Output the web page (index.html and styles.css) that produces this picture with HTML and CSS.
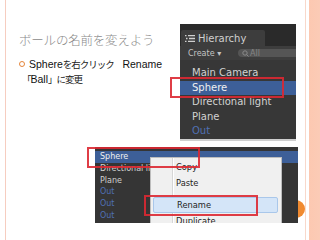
FILE: index.html
```html
<!DOCTYPE html>
<html lang="ja">
<head>
<meta charset="utf-8">
<link rel="stylesheet" href="styles.css">
</head>
<body>
<div class="slide">
  <h1 class="title">ボールの名前を変えよう</h1>
  <div class="point">
    <div class="line1"><span class="bullet"></span><span class="en">Sphere</span><span class="ja">を右クリック　</span><span class="en">Rename</span></div>
    <div class="line2"><span class="ja">「</span><span class="en">Ball</span><span class="ja">」に変更</span></div>
  </div>

  <div class="dot"></div>

  <div class="shot shot1">
    <div class="tabbar">
      <div class="tab">
        <svg class="tabicon" width="10" height="7" viewBox="0 0 10 7"><path d="M0 0.7h1.5M3 0.7h7M1 3.5h1.5M4 3.5h6M0 6.3h1.5M3 6.3h7" stroke="#cfcfcf" stroke-width="1.3" fill="none"/></svg>
        <span>Hierarchy</span>
      </div>
    </div>
    <div class="toolbar">
      <span class="create">Create ▾</span>
      <span class="search"><svg width="7" height="7" viewBox="0 0 7 7"><circle cx="3" cy="3" r="2.2" stroke="#8a8a8a" fill="none"/><path d="M4.6 4.6L6.5 6.5" stroke="#8a8a8a"/></svg>All</span>
    </div>
    <ul class="rows">
      <li>Main Camera</li>
      <li class="sel">Sphere</li>
      <li>Directional light</li>
      <li>Plane</li>
      <li class="prefab">Out</li>
    </ul>
  </div>

  <div class="shot shot2">
    <ul class="rows2">
      <li class="sel">Sphere</li>
      <li>Directional light</li>
      <li>Plane</li>
      <li class="prefab">Out</li>
      <li class="prefab">Out</li>
      <li class="prefab">Out</li>
    </ul>
    <div class="menu">
      <div class="item">Copy</div>
      <div class="item">Paste</div>
      <div class="sep"></div>
      <div class="item hl">Rename</div>
      <div class="item">Duplicate</div>
    </div>
  </div>

  <div class="mark mark1"></div>
  <div class="mark mark2"></div>
  <div class="mark mark3"></div>
</div>
</body>
</html>
```

FILE: styles.css
```css
html, body {
  margin: 0;
  padding: 0;
}
body {
  width: 320px;
  height: 240px;
  overflow: hidden;
  background: #fff;
}
.slide {
  position: relative;
  width: 320px;
  height: 240px;
  box-sizing: border-box;
  padding: 32px 0 0 19px;
  background: linear-gradient(to right,
    #fff 0, #fff 5px, #f6cdc0 5px, #f6cdc0 6px, #fff 6px,
    #fff 305px, #f8d8cb 305px, #f8d8cb 306px, #fff 306px,
    #fff 309px, #fcc8b1 309px, #fbcbb6 320px);
  font-family: "Liberation Sans", "Noto Sans CJK JP", sans-serif;
}
.title {
  margin: 0;
  font-family: "Noto Sans CJK JP", sans-serif;
  font-weight: 300;
  font-size: 12.5px;
  line-height: 15px;
  color: #8a8a8a;
  letter-spacing: -0.2px;
}
.point {
  margin-top: 10px;
  font-size: 10.5px;
  line-height: 15px;
  color: #111;
}
.line1 {
  display: flex;
  align-items: center;
}
.bullet {
  width: 4px;
  height: 4px;
  border: 1px solid #e5853a;
  border-radius: 50%;
  margin-right: 4px;
  margin-top: -1px;
}
.ja {
  font-family: "Noto Sans CJK JP", sans-serif;
  font-size: 9.5px;
  letter-spacing: -1px;
  color: #222;
}
.line2 {
  padding-left: 3px;
}
.dot {
  position: absolute;
  left: 287px;
  top: 200px;
  width: 18px;
  height: 18px;
  border-radius: 50%;
  background: #f08a30;
}
.shot {
  position: absolute;
  font-family: "DejaVu Sans", sans-serif;
  overflow: hidden;
}
.shot1 {
  left: 180px;
  top: 24px;
  width: 116px;
  height: 115px;
  background: #373737;
  border-bottom: 2px solid #cfcfcf;
}
.tabbar {
  height: 22px;
  background: #2a2a2a;
  display: flex;
  align-items: flex-end;
  padding-left: 1px;
}
.tab {
  width: 84px;
  height: 16px;
  background: #3d3d3d;
  border-radius: 2px 2px 0 0;
  display: flex;
  align-items: center;
  gap: 3px;
  padding-left: 4px;
  box-sizing: border-box;
  color: #d0d0d0;
  font-size: 10px;
}
.toolbar {
  height: 14px;
  background: #3d3d3d;
  display: flex;
  align-items: center;
  padding-left: 8px;
  gap: 0;
  font-size: 8px;
  color: #c4c4c4;
}
.create {
  width: 50px;
}
.search {
  flex: 1;
  height: 8px;
  background: #555;
  border-radius: 4px 0 0 4px;
  display: flex;
  align-items: center;
  gap: 1px;
  padding-left: 4px;
  color: #858585;
  font-size: 8px;
}
.rows {
  list-style: none;
  margin: 0;
  padding: 6px 0 0;
}
.rows li {
  height: 14.5px;
  line-height: 14.5px;
  padding-left: 12px;
  font-size: 10px;
  color: #d2d2d2;
  white-space: nowrap;
}
.rows li.sel, .rows2 li.sel {
  background: #3d5f98;
  color: #f0f0f0;
}
.rows li.prefab, .rows2 li.prefab {
  color: #5070b4;
}
.shot2 {
  left: 95px;
  top: 147px;
  width: 203px;
  height: 76px;
  background: #353535;
}
.rows2 {
  list-style: none;
  margin: 0;
  padding: 4px 0 0;
}
.rows2 li {
  height: 11.8px;
  line-height: 11.8px;
  padding-left: 5px;
  font-size: 8px;
  color: #cfcfcf;
  white-space: nowrap;
}
.menu {
  position: absolute;
  left: 55px;
  top: 10px;
  width: 132px;
  height: 80px;
  background: #f0f0f0;
  border: 1px solid #bdbdbd;
  box-sizing: border-box;
  background-image: linear-gradient(to right, transparent 21px, #d6d6d6 21px, #d6d6d6 22px, #fff 22px, #fff 23px, transparent 23px);
  padding-top: 1px;
}
.item {
  height: 16px;
  line-height: 16px;
  padding-left: 25px;
  font-size: 8.3px;
  color: #1e1e1e;
}
.sep {
  height: 6px;
}
.item.hl {
  margin: 0 3px 0 2px;
  padding-left: 23px;
  height: 16px;
  line-height: 14px;
  box-sizing: border-box;
  background: #d4e5f8;
  border: 1px solid #a9c7ea;
  border-radius: 2px;
}
.mark {
  position: absolute;
  border: 2px solid rgba(220, 40, 50, 0.9);
  box-sizing: border-box;
}
.mark1 {
  left: 170px;
  top: 77px;
  width: 114px;
  height: 21px;
}
.mark2 {
  left: 87px;
  top: 147px;
  width: 113px;
  height: 21px;
}
.mark3 {
  left: 144px;
  top: 195px;
  width: 114px;
  height: 21px;
}
```
